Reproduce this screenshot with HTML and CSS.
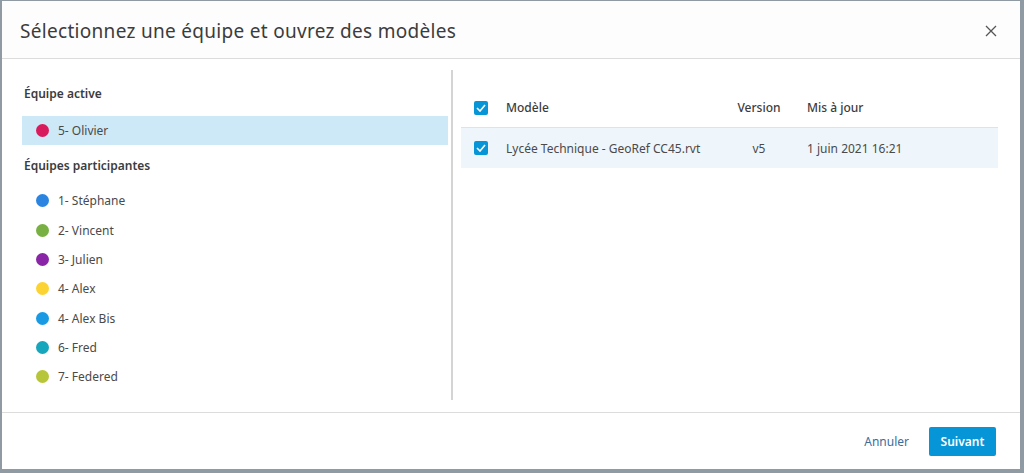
FILE: index.html
```html
<!DOCTYPE html>
<html lang="fr">
<head>
    <meta charset="UTF-8">
    <title>Sélectionnez une équipe</title>
    <link rel="stylesheet" href="styles.css">
</head>
<body>
    <div class="dialog">
        <div class="header">
            <h1>Sélectionnez une équipe et ouvrez des modèles</h1>
            <button class="close" aria-label="Fermer">
                <svg width="12" height="12" viewBox="0 0 12 12"><path d="M1 1 L11 11 M11 1 L1 11" stroke="#555" stroke-width="1.3" fill="none"/></svg>
            </button>
        </div>

        <div class="content">
            <div class="teams">
                <h2>Équipe active</h2>
                <ul class="team-list">
                    <li class="active"><span class="dot" style="background:#d81b5c"></span>5- Olivier</li>
                </ul>

                <h2 class="second">Équipes participantes</h2>
                <ul class="team-list">
                    <li><span class="dot" style="background:#2b84e0"></span>1- Stéphane</li>
                    <li><span class="dot" style="background:#78b043"></span>2- Vincent</li>
                    <li><span class="dot" style="background:#8a25a8"></span>3- Julien</li>
                    <li><span class="dot" style="background:#fbd433"></span>4- Alex</li>
                    <li><span class="dot" style="background:#1b9ae4"></span>4- Alex Bis</li>
                    <li><span class="dot" style="background:#17a7bd"></span>6- Fred</li>
                    <li><span class="dot" style="background:#b7c53a"></span>7- Federed</li>
                </ul>
            </div>

            <div class="divider"></div>

            <div class="models">
                <div class="row head">
                    <span class="check"><svg width="10" height="8" viewBox="0 0 10 8"><path d="M1 4 L4 7 L9 1" stroke="#fff" stroke-width="1.6" fill="none"/></svg></span>
                    <span>Modèle</span>
                    <span class="center">Version</span>
                    <span class="date">Mis à jour</span>
                </div>
                <div class="row selected">
                    <span class="check"><svg width="10" height="8" viewBox="0 0 10 8"><path d="M1 4 L4 7 L9 1" stroke="#fff" stroke-width="1.6" fill="none"/></svg></span>
                    <span>Lycée Technique - GeoRef CC45.rvt</span>
                    <span class="center">v5</span>
                    <span class="date">1 juin 2021 16:21</span>
                </div>
            </div>
        </div>

        <div class="footer">
            <button class="cancel">Annuler</button>
            <button class="next">Suivant</button>
        </div>
    </div>
</body>
</html>
```

FILE: styles.css
```css
*{
    margin: 0;
    padding: 0;
    list-style: none;
    box-sizing: border-box;
}

body{
    height: 100vh;
    background-color: #8f9aa3;
    font-family: "Noto Sans", sans-serif;
    color: #3c3c3c;
    padding: 1px 4px 4px 2px;
}

.dialog{
    height: 100%;
    background-color: #fff;
    display: flex;
    flex-direction: column;
}

.header{
    height: 58px;
    border-bottom: 1px solid #dcdcdc;
    display: flex;
    align-items: center;
    justify-content: space-between;
    padding: 2px 22px 0 18px;
    background-color: #fdfdfd;
}

.header h1{
    font-size: 19px;
    font-weight: 400;
    color: #3c3c3c;
    letter-spacing: 0.3px;
}

.close{
    border: none;
    background: none;
    width: 14px;
    height: 14px;
    display: flex;
    align-items: center;
    justify-content: center;
}

.content{
    flex: 1;
    display: flex;
    padding: 11px 22px 12px 20px;
}

.teams{
    width: 426px;
    padding-top: 14px;
}

.teams h2{
    font-size: 12px;
    font-weight: 600;
    line-height: 20px;
    padding-left: 2px;
    margin-bottom: 12px;
}

.teams h2.second{
    margin-top: 11px;
    margin-bottom: 10px;
}

.team-list li{
    height: 29.3px;
    display: flex;
    align-items: center;
    font-size: 12px;
    color: #4a4a4a;
    padding-left: 14px;
}

.team-list li.active{
    background-color: #cde8f6;
}

.dot{
    width: 13px;
    height: 13px;
    border-radius: 50%;
    margin-right: 9px;
}

.divider{
    width: 2px;
    background-color: #d4d4d4;
    margin-left: 3px;
}

.models{
    flex: 1;
    padding: 18px 0 0 8px;
}

.row{
    display: grid;
    grid-template-columns: 45px 1fr 80px 199px;
    align-items: center;
    height: 40px;
    font-size: 12px;
}

.row.head{
    border-bottom: 1px solid #e2e2e2;
    font-weight: 500;
    color: #3c3c3c;
}

.row.selected{
    background-color: #eef5fb;
    color: #4a4a4a;
}

.check{
    width: 14px;
    height: 14px;
    background-color: #0696d7;
    border-radius: 2px;
    margin-left: 13px;
    display: flex;
    align-items: center;
    justify-content: center;
}

.center{
    text-align: center;
}

.date{
    padding-left: 8px;
}

.footer{
    height: 57px;
    border-top: 1px solid #dcdcdc;
    display: flex;
    align-items: center;
    justify-content: flex-end;
    padding-right: 24px;
    gap: 20px;
}

.cancel{
    border: none;
    background: none;
    font-family: inherit;
    font-size: 12px;
    color: #3a6d9a;
}

.next{
    border: none;
    background-color: #0696d7;
    color: #fff;
    font-family: inherit;
    font-size: 12px;
    font-weight: 600;
    width: 67px;
    height: 29px;
    border-radius: 2px;
}
```
